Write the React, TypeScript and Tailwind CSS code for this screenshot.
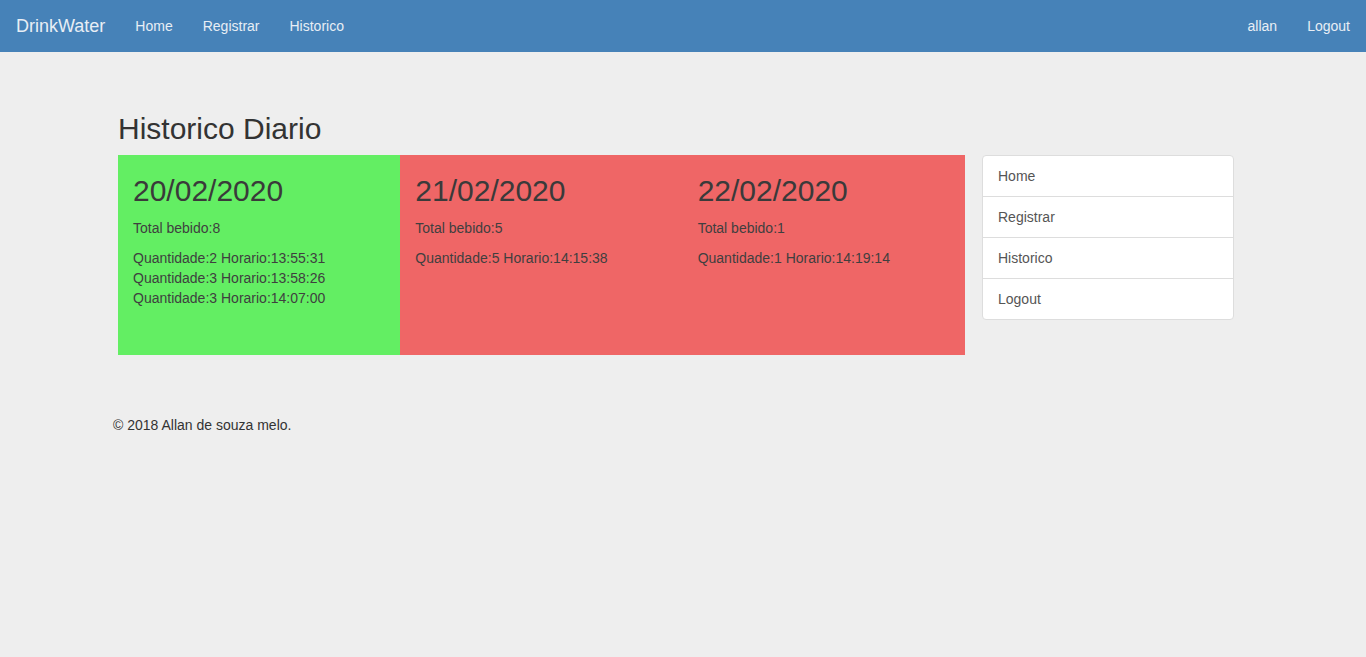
const days = [
  {
    date: "20/02/2020",
    total: 8,
    ok: true,
    items: [
      { q: 2, h: "13:55:31" },
      { q: 3, h: "13:58:26" },
      { q: 3, h: "14:07:00" },
    ],
  },
  { date: "21/02/2020", total: 5, ok: false, items: [{ q: 5, h: "14:15:38" }] },
  { date: "22/02/2020", total: 1, ok: false, items: [{ q: 1, h: "14:19:14" }] },
];

const links = ["Home", "Registrar", "Historico", "Logout"];

export default function App() {
  return (
    <div className="min-h-[657px] bg-[#eeeeee] font-['Liberation_Sans',Arial,sans-serif] text-[14px] leading-[20px] text-[#333]">
      {/* navbar */}
      <nav className="h-[52px] bg-[#4682b8] flex items-center justify-between text-[#e8eef5]">
        <div className="flex items-center">
          <span className="pl-4 pr-[15px] text-[18px]">DrinkWater</span>
          <span className="px-[15px]">Home</span>
          <span className="px-[15px]">Registrar</span>
          <span className="px-[15px]">Historico</span>
        </div>
        <div className="flex items-center">
          <span className="px-[15px]">allan</span>
          <span className="pl-[15px] pr-4">Logout</span>
        </div>
      </nav>

      <div className="w-[1140px] mx-auto pt-[60px]">
        <div className="flex gap-[17px] pl-[5px]">
          <div className="w-[847px]">
            <h2 className="text-[30px] leading-[33px] mb-[10px]">Historico Diario</h2>
            <div className="flex h-[200px]">
              {days.map((d) => (
                <div
                  key={d.date}
                  className={`flex-1 px-[15px] pt-[19px] ${d.ok ? "bg-[#63ee63]" : "bg-[#ef6666]"}`}
                >
                  <div className="text-[30px] leading-[33px] mb-[11px] text-[#3a3a3a]">{d.date}</div>
                  <p className="mb-[10px] text-[#3f3f3f]">Total bebido:{d.total}</p>
                  {d.items.map((it) => (
                    <div key={it.h} className="text-[#3f3f3f]">
                      Quantidade:{it.q} Horario:{it.h}
                    </div>
                  ))}
                </div>
              ))}
            </div>
          </div>

          <div className="w-[252px] pt-[43px]">
            <div className="bg-white border border-[#dddddd] rounded-[4px] text-[#555]">
              {links.map((l, i) => (
                <div
                  key={l}
                  className={`px-[15px] flex items-center ${i > 0 ? "h-[41px] border-t border-[#dddddd]" : "h-[40px]"}`}
                >
                  {l}
                </div>
              ))}
            </div>
          </div>
        </div>

        <footer className="mt-[60px]">
          <p>© 2018 Allan de souza melo.</p>
        </footer>
      </div>
    </div>
  );
}
